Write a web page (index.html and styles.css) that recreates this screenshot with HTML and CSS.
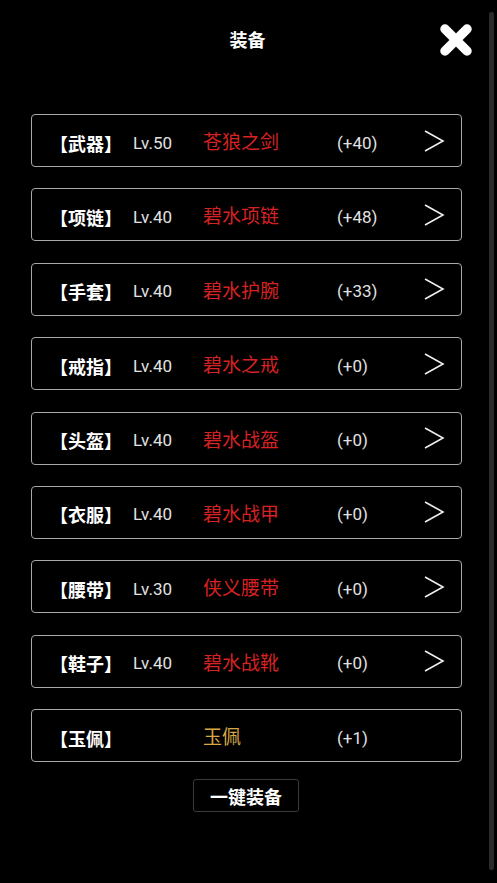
FILE: index.html
```html
<!DOCTYPE html>
<html lang="zh">
<head>
<meta charset="utf-8">
<link rel="stylesheet" href="styles.css">
</head>
<body>
<div class="page">
  <header class="header">
    <div class="title">装备</div>
    <div class="close">
      <svg width="34" height="34" viewBox="0 0 34 34"><path d="M6 6 L28 28 M28 6 L6 28" stroke="#fff" stroke-width="9.5" stroke-linecap="round"/></svg>
    </div>
  </header>
  <main class="list">
    <div class="row"><span class="slot">【武器】</span><span class="lv">Lv.50</span><span class="name red">苍狼之剑</span><span class="plus">(+40)</span><svg class="chev" width="22" height="24" viewBox="0 0 22 24"><polyline points="2,2 20,12 2,22" fill="none" stroke="#eee" stroke-width="1.6"/></svg></div>
    <div class="row"><span class="slot">【项链】</span><span class="lv">Lv.40</span><span class="name red">碧水项链</span><span class="plus">(+48)</span><svg class="chev" width="22" height="24" viewBox="0 0 22 24"><polyline points="2,2 20,12 2,22" fill="none" stroke="#eee" stroke-width="1.6"/></svg></div>
    <div class="row"><span class="slot">【手套】</span><span class="lv">Lv.40</span><span class="name red">碧水护腕</span><span class="plus">(+33)</span><svg class="chev" width="22" height="24" viewBox="0 0 22 24"><polyline points="2,2 20,12 2,22" fill="none" stroke="#eee" stroke-width="1.6"/></svg></div>
    <div class="row"><span class="slot">【戒指】</span><span class="lv">Lv.40</span><span class="name red">碧水之戒</span><span class="plus">(+0)</span><svg class="chev" width="22" height="24" viewBox="0 0 22 24"><polyline points="2,2 20,12 2,22" fill="none" stroke="#eee" stroke-width="1.6"/></svg></div>
    <div class="row"><span class="slot">【头盔】</span><span class="lv">Lv.40</span><span class="name red">碧水战盔</span><span class="plus">(+0)</span><svg class="chev" width="22" height="24" viewBox="0 0 22 24"><polyline points="2,2 20,12 2,22" fill="none" stroke="#eee" stroke-width="1.6"/></svg></div>
    <div class="row"><span class="slot">【衣服】</span><span class="lv">Lv.40</span><span class="name red">碧水战甲</span><span class="plus">(+0)</span><svg class="chev" width="22" height="24" viewBox="0 0 22 24"><polyline points="2,2 20,12 2,22" fill="none" stroke="#eee" stroke-width="1.6"/></svg></div>
    <div class="row"><span class="slot">【腰带】</span><span class="lv">Lv.30</span><span class="name red">侠义腰带</span><span class="plus">(+0)</span><svg class="chev" width="22" height="24" viewBox="0 0 22 24"><polyline points="2,2 20,12 2,22" fill="none" stroke="#eee" stroke-width="1.6"/></svg></div>
    <div class="row"><span class="slot">【鞋子】</span><span class="lv">Lv.40</span><span class="name red">碧水战靴</span><span class="plus">(+0)</span><svg class="chev" width="22" height="24" viewBox="0 0 22 24"><polyline points="2,2 20,12 2,22" fill="none" stroke="#eee" stroke-width="1.6"/></svg></div>
    <div class="row"><span class="slot">【玉佩】</span><span class="lv"></span><span class="name gold">玉佩</span><span class="plus">(+1)</span></div>
  </main>
  <div class="actions"><button class="equip-btn">一键装备</button></div>
  <div class="scrollbar"></div>
</div>
</body>
</html>
```
FILE: styles.css
```css
html, body {
  margin: 0;
  padding: 0;
  background: #000;
}
body {
  width: 497px;
  height: 883px;
  overflow: hidden;
  font-family: Roboto, "Noto Sans CJK SC", sans-serif;
  color: #fff;
}
.page {
  position: relative;
  width: 497px;
  height: 883px;
}
.header {
  position: relative;
  height: 78px;
  display: flex;
  justify-content: center;
  align-items: center;
}
.title {
  font-family: "Noto Sans CJK SC", sans-serif;
  font-weight: 700;
  font-size: 18px;
  color: #fff;
  margin-right: 2px;
}
.close {
  position: absolute;
  left: 439px;
  top: 23px;
  width: 34px;
  height: 34px;
}
.close svg { display: block; }
.list {
  margin-top: 36px;
  padding-left: 31px;
  display: flex;
  flex-direction: column;
  gap: 21.4px;
}
.row {
  box-sizing: border-box;
  width: 431px;
  height: 53px;
  border: 1px solid #a8a8a8;
  border-radius: 4px;
  display: flex;
  align-items: center;
  padding-left: 18px;
  padding-top: 4px;
}
.slot {
  width: 83px;
  font-family: "Noto Sans CJK SC", sans-serif;
  font-weight: 700;
  font-size: 18px;
  color: #fff;
  flex-shrink: 0;
}
.lv {
  width: 70px;
  font-size: 17px;
  color: #e2e2e2;
  flex-shrink: 0;
}
.name {
  width: 134px;
  font-family: "Noto Sans CJK SC", sans-serif;
  font-size: 19px;
  flex-shrink: 0;
  margin-bottom: 4px;
}
.red { color: #d62222; }
.gold { color: #d9a845; }
.plus {
  flex: 1;
  font-size: 17px;
  color: #e2e2e2;
}
.chev {
  display: block;
  margin-right: 16px;
  margin-bottom: 4px;
}
.actions {
  margin-top: 17px;
  display: flex;
  justify-content: center;
  padding-right: 5px;
}
.equip-btn {
  box-sizing: border-box;
  width: 106px;
  height: 33px;
  background: #000;
  border: 1px solid #3a3a3a;
  border-radius: 3px;
  color: #fff;
  font-family: "Noto Sans CJK SC", sans-serif;
  font-weight: 700;
  font-size: 18px;
  padding: 0;
}
.scrollbar {
  position: absolute;
  left: 489px;
  top: 12px;
  width: 5px;
  height: 858px;
  background: #2a2a2a;
  border-radius: 2px;
}
```
